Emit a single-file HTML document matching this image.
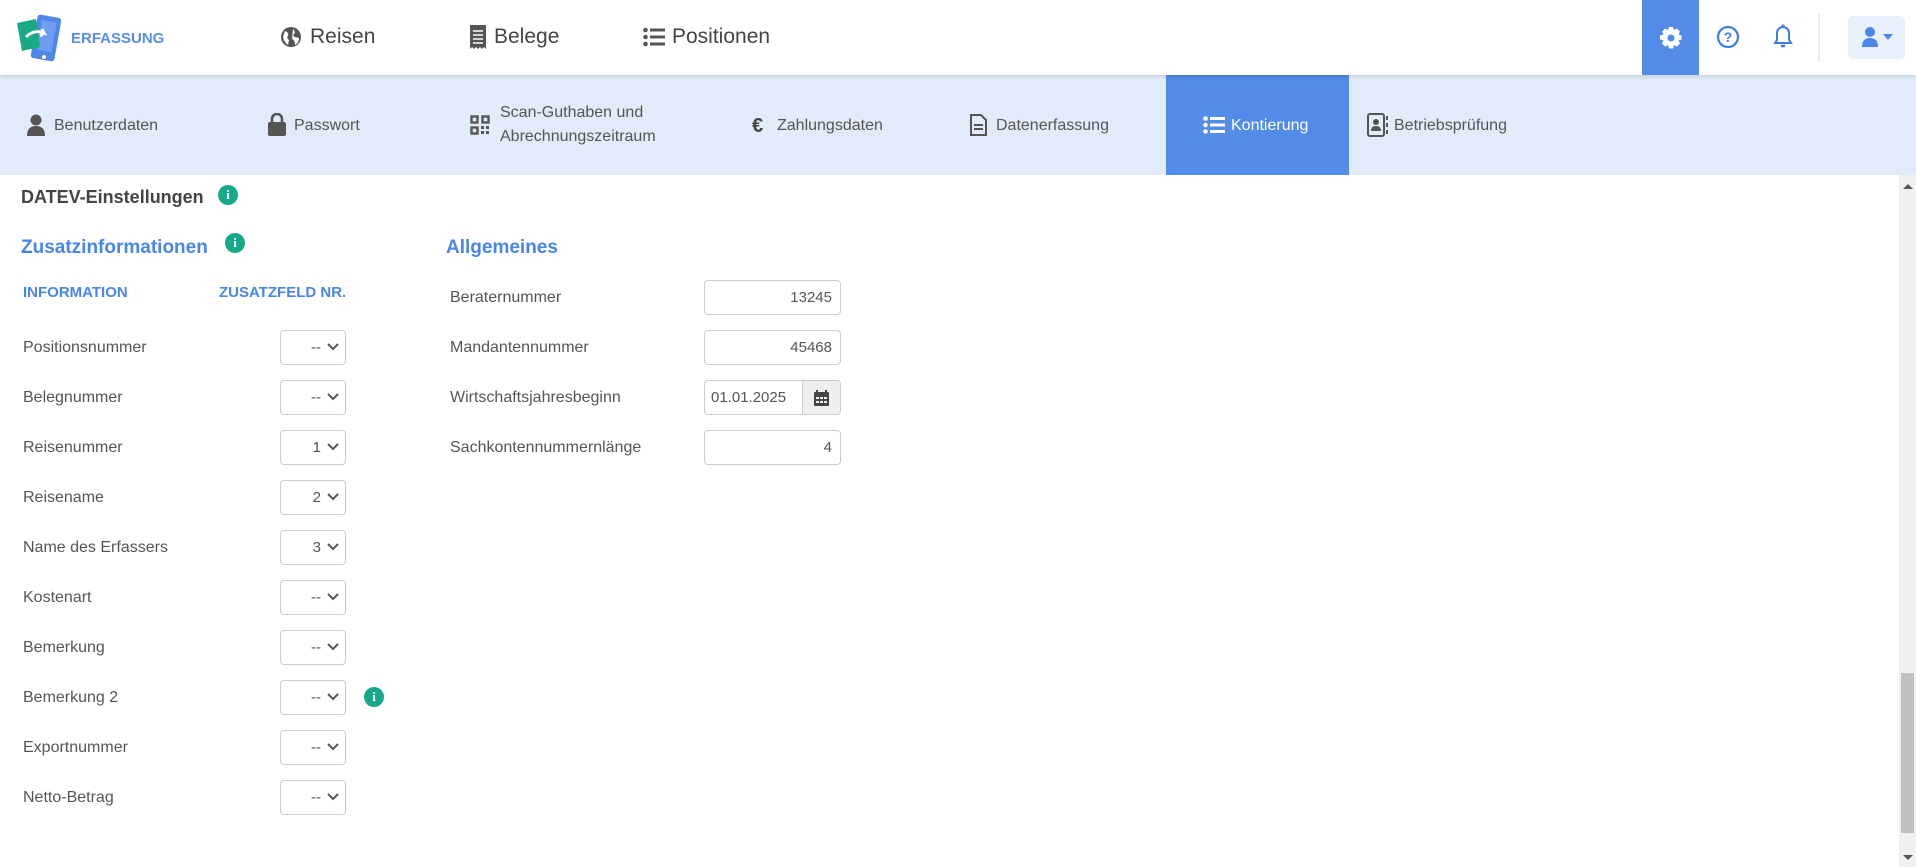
<!DOCTYPE html>
<html><head><meta charset="utf-8">
<style>
*{box-sizing:border-box;margin:0;padding:0}
body{width:1916px;height:867px;overflow:hidden;background:#fff;font-family:"Liberation Sans",sans-serif;color:#555;position:relative}
.a{position:absolute;white-space:nowrap}
.hdr{position:absolute;left:0;top:0;width:1916px;height:75px;background:#fff;box-shadow:0 2px 4px rgba(0,0,0,.12);z-index:2}
.sub{position:absolute;left:0;top:75px;width:1916px;height:100px;background:#e1ebf9}
.nav{font-size:21px;color:#444;top:25px}
.si{font-size:16px;color:#555}
.lbl{font-size:16px;color:#555}
.sel{position:absolute;left:280px;width:66px;height:35px;border:1px solid #ccc;border-radius:4px;font-size:15px;color:#555;text-align:right;padding-right:24px;line-height:33px}
.sel svg{position:absolute;right:6px;top:12px}
.inp{position:absolute;left:704px;width:137px;height:35px;border:1px solid #ccc;border-radius:4px;font-size:15px;color:#555;text-align:right;padding-right:8px;line-height:33px}
.info{position:absolute;width:20px;height:20px;border-radius:50%;background:#17a88a;color:#fff;font:bold 13px "Liberation Serif",serif;text-align:center;line-height:20px}
</style></head><body>
<div class="hdr">
 <svg class="a" style="left:14px;top:13px" width="50" height="50" viewBox="0 0 50 50">
  <rect x="20" y="3" width="24" height="44" rx="3" fill="#4f86e8" transform="rotate(10 32 25)"/>
  <rect x="25" y="8" width="15" height="30" fill="#6d9cf0" transform="rotate(10 32 25)"/>
  <circle cx="30" cy="44" r="2" fill="#fff"/>
  <path d="M3 10 L22 6 L26 34 L8 38 Z" fill="#1aa985"/>
  <path d="M12 24 Q20 16 30 20 L28 16 M30 20 L26 23" stroke="#fff" stroke-width="3" fill="none"/>
 </svg>
 <div class="a" style="left:71px;top:30px;font-size:15px;color:#5b8de6;font-weight:bold">ERFASSUNG</div>
 <svg class="a" style="left:280px;top:26px" width="22" height="22" viewBox="0 0 22 22"><circle cx="11" cy="11" r="10" fill="#555"/><path d="M5 5 Q9 6 8 10 Q6 12 9 14 L8 19 Q4 16 3 11Z M13 3 Q16 6 14 8 Q12 9 15 11 L19 12 Q19 17 15 19 Q15 14 12 13Z" fill="#fff"/></svg>
 <div class="a nav" style="left:310px">Reisen</div>
 <svg class="a" style="left:470px;top:25px" width="16" height="24" viewBox="0 0 16 24"><path d="M0 0h16v24l-2-2-2 2-2-2-2 2-2-2-2 2-2-2-2 2z" fill="#555"/><path d="M3 6h10M3 10h10M3 14h10M3 18h10" stroke="#fff" stroke-width="1.5"/></svg>
 <div class="a nav" style="left:494px">Belege</div>
 <svg class="a" style="left:643px;top:27px" width="22" height="20" viewBox="0 0 22 20"><g fill="#555"><circle cx="2.5" cy="3" r="2.3"/><circle cx="2.5" cy="10" r="2.3"/><circle cx="2.5" cy="17" r="2.3"/><rect x="7" y="1.5" width="15" height="3"/><rect x="7" y="8.5" width="15" height="3"/><rect x="7" y="15.5" width="15" height="3"/></g></svg>
 <div class="a nav" style="left:672px">Positionen</div>
 <div class="a" style="left:1642px;top:0;width:57px;height:75px;background:#528be8"></div>
 <svg class="a" style="left:1660px;top:27px" width="22" height="22" viewBox="0 0 22 22"><path d="M9 0h4l1 3 3-1.5 3 3L18.5 7.5l3 1v4l-3 1L20 16.5l-3 3L14 18l-1 3.5H9L8 18l-3 1.5-3-3L3.5 13.5 0 12.5v-4l3.5-1L2 4.5l3-3L8 3z" fill="#fff"/><circle cx="11" cy="11" r="3.5" fill="#528be8"/></svg>
 <svg class="a" style="left:1716px;top:25px" width="24" height="24" viewBox="0 0 24 24"><circle cx="12" cy="12" r="10" fill="none" stroke="#3d7ce6" stroke-width="2.2"/><text x="12" y="17" font-family="Liberation Sans" font-weight="bold" font-size="14" fill="#3d7ce6" text-anchor="middle">?</text></svg>
 <svg class="a" style="left:1773px;top:24px" width="20" height="26" viewBox="0 0 20 26"><path d="M10 3a6 6 0 0 0-6 6v7l-2 3h16l-2-3V9a6 6 0 0 0-6-6z" fill="none" stroke="#3d7ce6" stroke-width="2"/><circle cx="10" cy="2" r="1.5" fill="#3d7ce6"/><path d="M8 22h4" stroke="#3d7ce6" stroke-width="2.5"/></svg>
 <div class="a" style="left:1818px;top:14px;width:2px;height:48px;background:#e5edf9"></div>
 <div class="a" style="left:1848px;top:16px;width:57px;height:43px;background:#e8f0fb;border-radius:5px"></div>
 <svg class="a" style="left:1862px;top:26px" width="32" height="22" viewBox="0 0 32 22"><circle cx="8" cy="6" r="5" fill="#4a86e8"/><path d="M0 21q0-9 8-9t8 9z" fill="#4a86e8"/><path d="M21 8h10l-5 6z" fill="#4a86e8"/></svg>
</div>
<div class="sub">
 <svg class="a" style="left:27px;top:39px" width="18" height="22" viewBox="0 0 18 22"><circle cx="9" cy="6" r="5.5" fill="#555"/><path d="M0 22q0-10 9-10t9 10z" fill="#555"/></svg>
 <div class="a si" style="left:54px;top:42px">Benutzerdaten</div>
 <svg class="a" style="left:268px;top:38px" width="18" height="23" viewBox="0 0 18 23"><path d="M4 10V6a5 5 0 0 1 10 0v4" fill="none" stroke="#555" stroke-width="2.6"/><rect x="0" y="9" width="18" height="14" rx="2" fill="#555"/></svg>
 <div class="a si" style="left:294px;top:42px">Passwort</div>
 <svg class="a" style="left:470px;top:40px" width="20" height="20" viewBox="0 0 20 20"><g fill="none" stroke="#555" stroke-width="2.4"><rect x="1.5" y="1.5" width="6" height="6"/><rect x="12.5" y="1.5" width="6" height="6"/><rect x="1.5" y="12.5" width="6" height="6"/></g><path d="M11 11h3v3h-3zM16 11h3v3h-3zM11 16h3v3h-3zM16 16h3v3h-3z" fill="#555"/></svg>
 <div class="a si" style="left:500px;top:26px;line-height:24px">Scan-Guthaben und<br>Abrechnungszeitraum</div>
 <div class="a" style="left:752px;top:40px;font-size:20px;color:#444;font-weight:bold">€</div>
 <div class="a si" style="left:777px;top:42px">Zahlungsdaten</div>
 <svg class="a" style="left:970px;top:39px" width="17" height="22" viewBox="0 0 17 22"><path d="M1 1h10l5 5v15H1z" fill="none" stroke="#555" stroke-width="2"/><path d="M4 11h9M4 15h9" stroke="#555" stroke-width="2"/></svg>
 <div class="a si" style="left:996px;top:42px">Datenerfassung</div>
 <div class="a" style="left:1166px;top:0;width:183px;height:100px;background:#528be8"></div>
 <svg class="a" style="left:1203px;top:41px" width="22" height="18" viewBox="0 0 22 18"><g fill="#fff"><circle cx="2.5" cy="2.5" r="2.3"/><circle cx="2.5" cy="9" r="2.3"/><circle cx="2.5" cy="15.5" r="2.3"/><rect x="7" y="1" width="15" height="3"/><rect x="7" y="7.5" width="15" height="3"/><rect x="7" y="14" width="15" height="3"/></g></svg>
 <div class="a si" style="left:1231px;top:42px;color:#fff">Kontierung</div>
 <svg class="a" style="left:1367px;top:38px" width="22" height="24" viewBox="0 0 22 24"><rect x="1" y="1" width="16" height="22" rx="2" fill="none" stroke="#555" stroke-width="2"/><circle cx="9" cy="9" r="3" fill="#555"/><path d="M4 18q0-5 5-5t5 5z" fill="#555"/><path d="M20 3v4M20 10v4M20 17v4" stroke="#555" stroke-width="2"/></svg>
 <div class="a si" style="left:1394px;top:42px">Betriebsprüfung</div>
</div>
<div class="a" style="left:1899px;top:175px;width:17px;height:692px;background:#f0f0f0"></div>
<div class="a" style="left:1901px;top:673px;width:13px;height:160px;background:#c0c0c0"></div>
<svg class="a" style="left:1902px;top:183px" width="12" height="8"><path d="M1 6h10L6 1z" fill="#555"/></svg>
<svg class="a" style="left:1902px;top:853px" width="12" height="8"><path d="M1 2h10L6 7z" fill="#555"/></svg>

<div class="a" style="left:21px;top:187px;font-size:18px;font-weight:bold;color:#444">DATEV-Einstellungen</div>
<div class="info" style="left:218px;top:185px">i</div>
<div class="a" style="left:21px;top:237px;font-size:19px;font-weight:bold;color:#4a86e8">Zusatzinformationen</div>
<div class="info" style="left:225px;top:233px">i</div>
<div class="a" style="left:446px;top:237px;font-size:19px;font-weight:bold;color:#4a86e8">Allgemeines</div>
<div class="a" style="left:23px;top:284px;font-size:15px;font-weight:bold;color:#4a86e8">INFORMATION</div>
<div class="a" style="left:219px;top:284px;font-size:15px;font-weight:bold;color:#4a86e8">ZUSATZFELD NR.</div>

<div class="a lbl" style="left:23px;top:339px">Positionsnummer</div>
<div class="a lbl" style="left:23px;top:389px">Belegnummer</div>
<div class="a lbl" style="left:23px;top:439px">Reisenummer</div>
<div class="a lbl" style="left:23px;top:489px">Reisename</div>
<div class="a lbl" style="left:23px;top:539px">Name des Erfassers</div>
<div class="a lbl" style="left:23px;top:589px">Kostenart</div>
<div class="a lbl" style="left:23px;top:639px">Bemerkung</div>
<div class="a lbl" style="left:23px;top:689px">Bemerkung 2</div>
<div class="a lbl" style="left:23px;top:739px">Exportnummer</div>
<div class="a lbl" style="left:23px;top:789px">Netto-Betrag</div>

<div class="sel" style="top:330px">--<svg width="12" height="9"><path d="M1 1l5 5 5-5" stroke="#555" stroke-width="2" fill="none"/></svg></div>
<div class="sel" style="top:380px">--<svg width="12" height="9"><path d="M1 1l5 5 5-5" stroke="#555" stroke-width="2" fill="none"/></svg></div>
<div class="sel" style="top:430px">1<svg width="12" height="9"><path d="M1 1l5 5 5-5" stroke="#555" stroke-width="2" fill="none"/></svg></div>
<div class="sel" style="top:480px">2<svg width="12" height="9"><path d="M1 1l5 5 5-5" stroke="#555" stroke-width="2" fill="none"/></svg></div>
<div class="sel" style="top:530px">3<svg width="12" height="9"><path d="M1 1l5 5 5-5" stroke="#555" stroke-width="2" fill="none"/></svg></div>
<div class="sel" style="top:580px">--<svg width="12" height="9"><path d="M1 1l5 5 5-5" stroke="#555" stroke-width="2" fill="none"/></svg></div>
<div class="sel" style="top:630px">--<svg width="12" height="9"><path d="M1 1l5 5 5-5" stroke="#555" stroke-width="2" fill="none"/></svg></div>
<div class="sel" style="top:680px">--<svg width="12" height="9"><path d="M1 1l5 5 5-5" stroke="#555" stroke-width="2" fill="none"/></svg></div>
<div class="sel" style="top:730px">--<svg width="12" height="9"><path d="M1 1l5 5 5-5" stroke="#555" stroke-width="2" fill="none"/></svg></div>
<div class="sel" style="top:780px">--<svg width="12" height="9"><path d="M1 1l5 5 5-5" stroke="#555" stroke-width="2" fill="none"/></svg></div>
<div class="info" style="left:364px;top:687px">i</div>

<div class="a lbl" style="left:450px;top:289px">Beraternummer</div>
<div class="a lbl" style="left:450px;top:339px">Mandantennummer</div>
<div class="a lbl" style="left:450px;top:389px">Wirtschaftsjahresbeginn</div>
<div class="a lbl" style="left:450px;top:439px">Sachkontennummernlänge</div>
<div class="inp" style="top:280px">13245</div>
<div class="inp" style="top:330px">45468</div>
<div class="inp" style="top:380px;text-align:left;padding-left:6px;overflow:hidden">01.01.2025
 <div style="position:absolute;right:0;top:0;width:38px;height:33px;background:#eee;border-left:1px solid #ccc"></div>
 <svg style="position:absolute;right:11px;top:9px" width="15" height="16" viewBox="0 0 15 16"><rect x="0" y="2" width="15" height="14" rx="1" fill="#444"/><path d="M3 0v4M12 0v4" stroke="#444" stroke-width="2"/><g fill="#eee"><rect x="2" y="7" width="3" height="2"/><rect x="6" y="7" width="3" height="2"/><rect x="10" y="7" width="3" height="2"/><rect x="2" y="11" width="3" height="2"/><rect x="6" y="11" width="3" height="2"/><rect x="10" y="11" width="3" height="2"/></g></svg>
</div>
<div class="inp" style="top:430px">4</div>
</body></html>
